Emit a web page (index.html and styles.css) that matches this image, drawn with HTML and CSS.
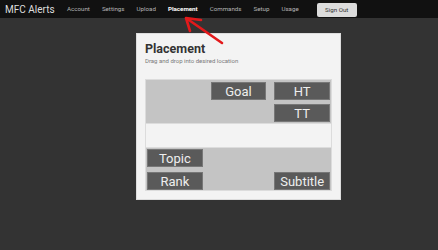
FILE: index.html
```html
<!DOCTYPE html>
<html lang="en">
<head>
    <meta charset="UTF-8">
    <meta name="viewport" content="width=device-width, initial-scale=1.0">
    <title>MFC Alerts - Placement</title>
    <link rel="stylesheet" href="styles.css">
</head>
<body>
    <header class="topbar">
        <span class="brand">MFC Alerts</span>
        <nav class="nav-links">
            <a href="#">Account</a>
            <a href="#">Settings</a>
            <a href="#">Upload</a>
            <a href="#" class="active">Placement</a>
            <a href="#">Commands</a>
            <a href="#">Setup</a>
            <a href="#">Usage</a>
        </nav>
        <button class="sign-out">Sign Out</button>
    </header>

    <main class="placement-card">
        <h1>Placement</h1>
        <p class="hint">Drag and drop into desired location</p>

        <div class="zone zone-top">
            <div class="slot"></div>
            <div class="item">Goal</div>
            <div class="item">HT</div>
            <div class="slot"></div>
            <div class="slot"></div>
            <div class="item">TT</div>
        </div>
        <div class="zone zone-middle"></div>
        <div class="zone zone-bottom">
            <div class="item">Topic</div>
            <div class="slot"></div>
            <div class="slot"></div>
            <div class="item">Rank</div>
            <div class="slot"></div>
            <div class="item">Subtitle</div>
        </div>
    </main>

    <svg class="arrow" width="60" height="40" viewBox="180 12 60 40">
        <path d="M201 20 L186 18 L190 31 M186 18 L222 43" fill="none" stroke="#e3191b" stroke-width="2.6" stroke-linecap="round" stroke-linejoin="round"/>
    </svg>
</body>
</html>
```

FILE: styles.css
```css
* {
    margin: 0;
    padding: 0;
    box-sizing: border-box;
    font-family: Roboto, "Liberation Sans", sans-serif;
}

body {
    background-color: #333333;
    position: relative;
    min-height: 250px;
}

.topbar {
    height: 18px;
    background-color: #111111;
    display: flex;
    align-items: center;
    padding-left: 5px;
}

.brand {
    color: #dddddd;
    font-size: 10px;
    width: 62px;
}

.nav-links {
    display: flex;
    gap: 12px;
}

.nav-links a {
    color: #b5b5b5;
    text-decoration: none;
    font-size: 6.2px;
}

.nav-links a.active {
    color: #ffffff;
    font-weight: 700;
}

.sign-out {
    margin-left: 18px;
    width: 40px;
    height: 14px;
    margin-top: 2px;
    background-color: #dcdcdc;
    color: #333333;
    border: none;
    border-radius: 2px;
    font-size: 6.2px;
}

.placement-card {
    width: 205px;
    height: 167px;
    margin: 15px 0 0 136px;
    background-color: #f3f3f3;
    border: 1px solid #dddddd;
    padding: 8px 8px 0 8px;
}

.placement-card h1 {
    font-size: 12.5px;
    line-height: 14px;
    font-weight: 700;
    color: #333333;
}

.hint {
    font-size: 6px;
    line-height: 8px;
    color: #7a7a7a;
    margin-top: 1px;
}

.zone {
    border: 1px solid #dcdcdc;
    display: grid;
    grid-template-columns: repeat(3, 1fr);
    column-gap: 8px;
    row-gap: 4px;
    padding: 2px 1px 1px 1px;
}

.zone-top {
    margin-top: 14px;
    height: 45px;
    background-color: #c4c4c4;
    grid-template-rows: 18px 18px;
}

.zone-middle {
    height: 23px;
    border-top: none;
    border-bottom: none;
}

.zone-bottom {
    height: 44px;
    padding-top: 1px;
    row-gap: 5px;
    background-color: #c4c4c4;
    grid-template-rows: 18px 18px;
}

.item {
    background-color: #5a5a5a;
    border: 1px solid #777777;
    color: #eeeeee;
    font-size: 13px;
    display: flex;
    align-items: center;
    justify-content: center;
}

.arrow {
    position: absolute;
    left: 180px;
    top: 12px;
}
```
